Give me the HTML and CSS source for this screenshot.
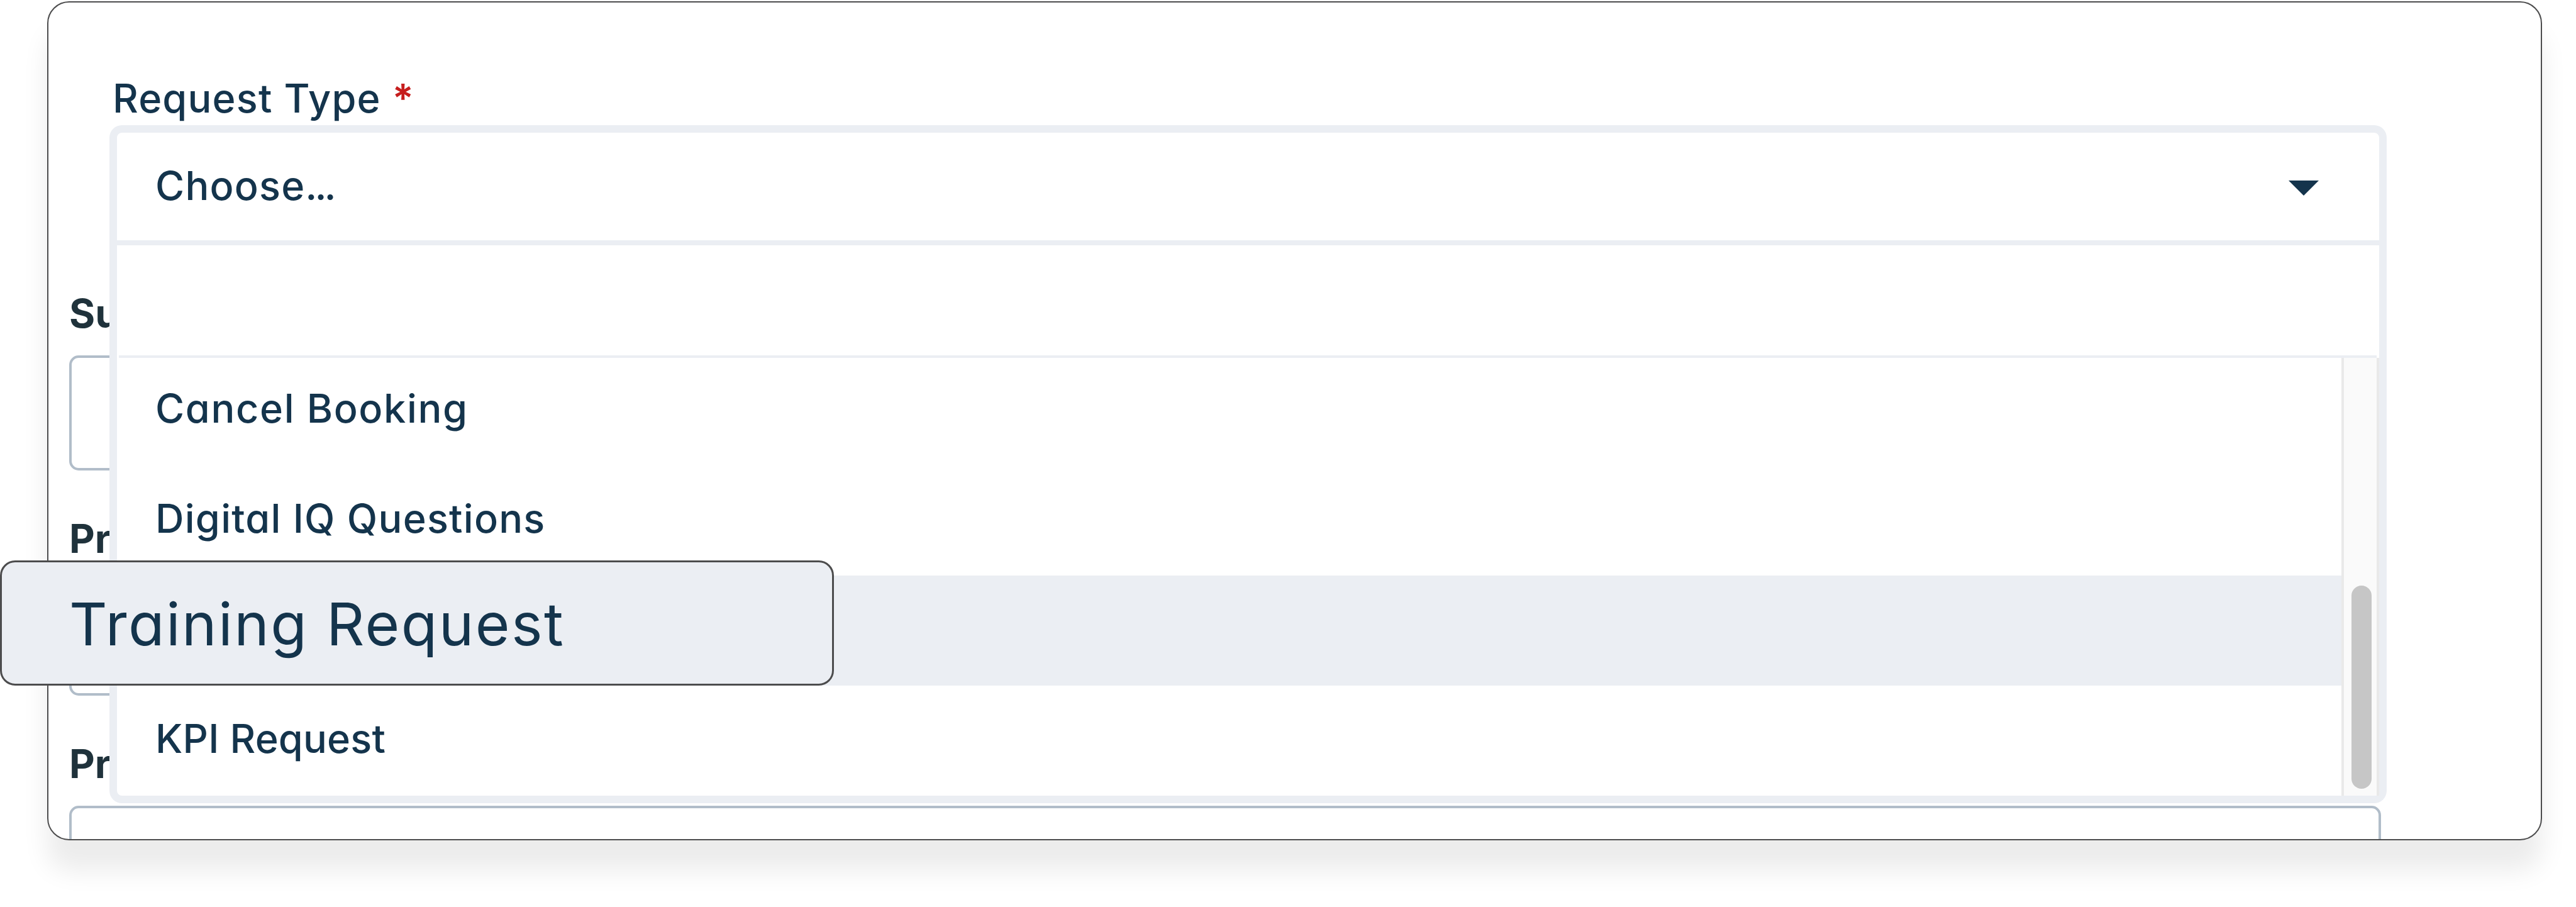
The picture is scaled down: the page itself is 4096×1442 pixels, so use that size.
FILE: index.html
```html
<!DOCTYPE html>
<html lang="en">
<head>
<meta charset="utf-8">
<title>Request form</title>
<link rel="stylesheet" href="styles.css">
</head>
<body>
<main class="stage">
  <section class="card">
    <div class="request">
      <div class="request-label">Request Type <span class="required">*</span></div>
      <div class="picker">
        <div class="control">
          <span class="placeholder">Choose<span class="dots">...</span></span>
          <svg class="caret" viewBox="0 0 48 24"><path d="M0 0H48L24 24Z"/></svg>
        </div>
        <div class="menu">
          <div class="search"></div>
          <div class="list">
            <div class="options">
              <div class="option first">Cancel Booking</div>
              <div class="option">Digital IQ Questions</div>
              <div class="option active"></div>
              <div class="option last">KPI Request</div>
            </div>
            <div class="track"><div class="thumb"></div></div>
          </div>
        </div>
      </div>
    </div>
    <div class="field"><div class="field-label">Su</div><div class="input"></div></div>
    <div class="field"><div class="field-label">Pr</div><div class="input"></div></div>
    <div class="field"><div class="field-label">Pr</div><div class="input"></div></div>
  </section>
  <div class="callout">Training Request</div>
</main>
</body>
</html>
```
FILE: styles.css
```css
* { box-sizing: border-box; }

body {
  margin: 0;
  background: #fff;
  color: #14344c;
  font-family: Inter, "Noto Sans", sans-serif;
  font-size: 63px;
  font-weight: 450;
  font-feature-settings: "cv11" 1;
  white-space: nowrap;
}

.stage {
  position: relative;
  width: 4096px;
  height: 1442px;
  padding: 2px 0 0 75px;
  overflow: hidden;
}

.card {
  width: 3967px;
  height: 1334px;
  overflow: hidden;
  background: #fff;
  border: 2px solid #4c4c4d;
  border-radius: 35px;
  box-shadow: 0 48px 40px rgba(0, 0, 0, 0.08);
}

.request { padding: 112px 0 0 97px; }

.request-label {
  height: 83px;
  padding-left: 5px;
  letter-spacing: 1.2px;
  line-height: 80px;
}

.required {
  color: #c61e1e;
  font-weight: 600;
}

.picker {
  position: relative;
  z-index: 1;
  width: 3621px;
}

.control {
  display: flex;
  justify-content: space-between;
  height: 191px;
  padding: 0 96px 0 61px;
  line-height: 168px;
  background: #fff;
  border: 12px solid #ebeef3;
  border-bottom-width: 8px;
  border-radius: 20px 20px 0 0;
}

.placeholder { letter-spacing: 1.2px; }

.dots { letter-spacing: -4px; }

.caret {
  width: 48px;
  height: 24px;
  margin-top: 76px;
  fill: #14344c;
}

.menu {
  position: absolute;
  top: 191px;
  left: 0;
  width: 100%;
  height: 887px;
  background: #fff;
  border: 12px solid #ebeef3;
  border-top: 0;
  border-radius: 0 0 20px 20px;
}

.search {
  height: 179px;
  margin: 0 4px 0 3px;
  border-bottom: 4px solid #ebeef3;
}

.list { display: flex; height: 696px; }

.options { flex: 1; }

.option {
  height: 175px;
  padding-left: 61px;
  letter-spacing: 1.25px;
  line-height: 168px;
}

.option.first {
  height: 171px;
  letter-spacing: 1.65px;
  line-height: 160px;
}

.option.last { letter-spacing: 0.2px; }

.option.active { background: #ebeef3; }

.track {
  width: 60px;
  padding: 362px 8px 0 12px;
  background: #fafafa;
  border: solid #e9e9e9;
  border-width: 0 4px;
}

.thumb {
  width: 32px;
  height: 323px;
  background: #c6c6c6;
  border-radius: 16px;
}

.field {
  width: 3709px;
  padding: 68px 0 0 33px;
}

.field-label {
  height: 107px;
  color: #1f323b;
  font-weight: 650;
  line-height: 80px;
}

.input {
  height: 183px;
  border: 4px solid #b1bdc9;
  border-radius: 15px;
}

.callout {
  position: absolute;
  z-index: 2;
  top: 891px;
  left: 0;
  width: 1326px;
  height: 199px;
  padding-left: 107px;
  font-size: 94px;
  font-weight: 430;
  letter-spacing: 2.4px;
  line-height: 197px;
  background: #ebeef3;
  border: 3.5px solid #4c4c4d;
  border-radius: 24px;
}
```
